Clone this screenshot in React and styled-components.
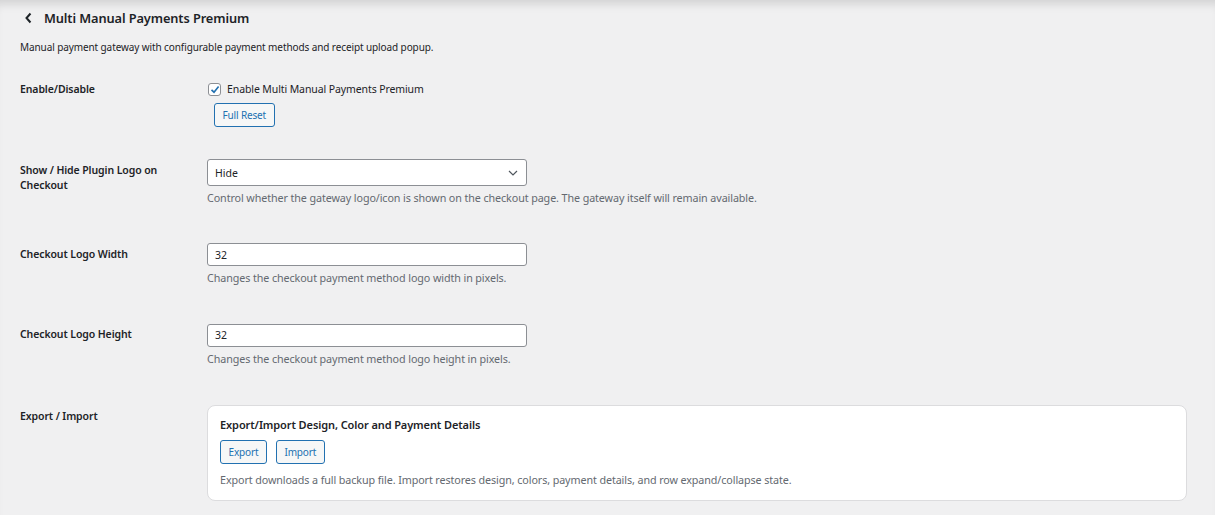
import React from "react"
import styled, { createGlobalStyle } from "styled-components"

const Global = createGlobalStyle`
  html, body {
    margin: 0;
    padding: 0;
    background: #f0f0f1;
  }
  body {
    font-family: "Noto Sans", "Open Sans", sans-serif;
    color: #1d2327;
    font-size: 11px;
  }
`

const Page = styled.div`
  min-height: 515px;
  box-sizing: border-box;
  padding: 8px 28px 0 20px;
  box-shadow: inset 0 10px 10px -6px rgba(0, 0, 0, 0.13);
`

const Heading = styled.h2`
  display: flex;
  align-items: center;
  gap: 11px;
  margin: 0;
  padding-left: 4px;
  font-size: 12.8px;
  line-height: 20px;
  font-weight: 600;
  letter-spacing: -0.1px;
  svg {
    display: block;
  }
`

const Intro = styled.p`
  margin: 11px 0 0;
  font-size: 10px;
  line-height: 16px;
  letter-spacing: -0.1px;
`

const Form = styled.div`
  display: flex;
  flex-direction: column;
  margin-top: 24px;
`

const Row = styled.div`
  display: grid;
  grid-template-columns: 187px 1fr;
  padding-top: ${(p) => p.$top || 0}px;
`

const Label = styled.div`
  font-weight: 600;
  font-size: 10.5px;
  line-height: 15px;
  padding-top: ${(p) => p.$pad ?? 3.5}px;
  padding-right: 40px;
  letter-spacing: -0.1px;
`

const Field = styled.div`
  display: flex;
  flex-direction: column;
  align-items: flex-start;
`

const CheckLine = styled.label`
  display: flex;
  align-items: center;
  gap: 6px;
  height: 20px;
  padding-left: 1px;
  font-size: 10.5px;
  letter-spacing: -0.1px;
`

const Box = styled.span`
  width: 11px;
  height: 11px;
  border: 1px solid #8c8f94;
  border-radius: 3px;
  background: #fff;
  display: flex;
  align-items: center;
  justify-content: center;
`

const Button = styled.button`
  font-family: inherit;
  font-size: 10px;
  line-height: 22px;
  height: 24px;
  padding: 0 7.5px;
  margin: ${(p) => p.$margin || "0"};
  color: #2271b1;
  border: 1px solid #2271b1;
  border-radius: 3px;
  background: #f6f7f7;
  box-sizing: border-box;
  letter-spacing: -0.15px;
`

const Select = styled.div`
  width: 320px;
  height: 27px;
  box-sizing: border-box;
  border: 1px solid #8c8f94;
  border-radius: 3px;
  background: #fff;
  display: flex;
  align-items: center;
  justify-content: space-between;
  padding: 0 8px 0 7px;
  font-size: 10.5px;
`

const Input = styled.div`
  width: 320px;
  height: 23px;
  box-sizing: border-box;
  border: 1px solid #8c8f94;
  border-radius: 3px;
  background: #fff;
  display: flex;
  align-items: center;
  padding: 0 7px;
  font-size: 10.5px;
`

const Hint = styled.p`
  margin: ${(p) => p.$mt || 4.5}px 0 0;
  font-size: 10.75px;
  line-height: 15px;
  color: #646970;
  letter-spacing: -0.1px;
`

const Card = styled.div`
  align-self: stretch;
  background: #fff;
  border: 1px solid #dcdcde;
  border-radius: 8px;
  padding: 11px 12px 11.5px;
`

const CardTitle = styled.div`
  font-weight: 600;
  font-size: 11px;
  line-height: 15px;
  letter-spacing: -0.1px;
`

const Buttons = styled.div`
  display: flex;
  gap: 9px;
  margin-top: 7.5px;
`

const Chevron = () => (
  <svg width="9" height="12" viewBox="0 0 9 12">
    <polyline points="6.5,1.5 2.5,6 6.5,10.5" fill="none" stroke="#1d2327" strokeWidth="2" />
  </svg>
)

const Tick = () => (
  <svg width="10" height="9" viewBox="0 0 10 9">
    <polyline points="1.5,4.8 4,7.2 8.6,1.4" fill="none" stroke="#2271b1" strokeWidth="1.6" />
  </svg>
)

const Caret = () => (
  <svg width="10" height="6" viewBox="0 0 10 6">
    <polyline points="1,1 5,5 9,1" fill="none" stroke="#50575e" strokeWidth="1.2" />
  </svg>
)

const App = () => {
  return (
    <Page>
      <Global />
      <Heading>
        <Chevron />
        Multi Manual Payments Premium
      </Heading>
      <Intro>Manual payment gateway with configurable payment methods and receipt upload popup.</Intro>

      <Form>
        <Row>
          <Label $pad={2.5}>Enable/Disable</Label>
          <Field>
            <CheckLine>
              <Box>
                <Tick />
              </Box>
              Enable Multi Manual Payments Premium
            </CheckLine>
            <Button $margin="4px 0 0 7px">Full Reset</Button>
          </Field>
        </Row>

        <Row $top={32}>
          <Label>Show / Hide Plugin Logo on Checkout</Label>
          <Field>
            <Select>
              Hide
              <Caret />
            </Select>
            <Hint>Control whether the gateway logo/icon is shown on the checkout page. The gateway itself will remain available.</Hint>
          </Field>
        </Row>

        <Row $top={37.5}>
          <Label>Checkout Logo Width</Label>
          <Field>
            <Input>32</Input>
            <Hint $mt={5}>Changes the checkout payment method logo width in pixels.</Hint>
          </Field>
        </Row>

        <Row $top={37.5}>
          <Label>Checkout Logo Height</Label>
          <Field>
            <Input>32</Input>
            <Hint $mt={5}>Changes the checkout payment method logo height in pixels.</Hint>
          </Field>
        </Row>

        <Row $top={38.5}>
          <Label>Export / Import</Label>
          <Field>
            <Card>
              <CardTitle>Export/Import Design, Color and Payment Details</CardTitle>
              <Buttons>
                <Button>Export</Button>
                <Button>Import</Button>
              </Buttons>
              <Hint $mt={9.5}>Export downloads a full backup file. Import restores design, colors, payment details, and row expand/collapse state.</Hint>
            </Card>
          </Field>
        </Row>
      </Form>
    </Page>
  )
}

export default App
